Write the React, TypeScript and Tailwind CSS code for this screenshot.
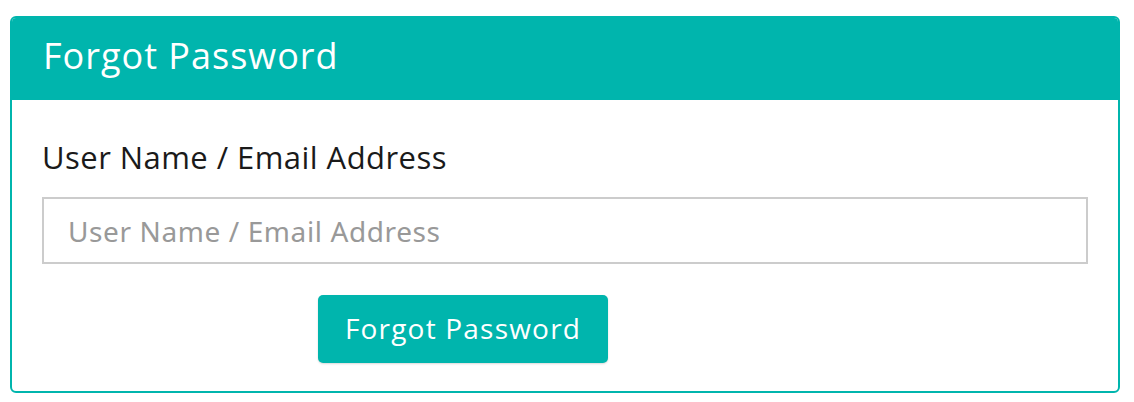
export default function App() {
  return (
    <div className="w-[1134px] h-[402px] bg-white pt-[16px] pl-[10px]" style={{ fontFamily: '"Open Sans", sans-serif' }}>
      <div className="w-[1110px] h-[377px] border-2 border-[#00b5ad] rounded-[6px] overflow-hidden flex flex-col">
        <div className="h-[82px] bg-[#00b5ad] flex items-center pl-[31px] pb-[6px]">
          <span className="text-white text-[36px] tracking-[1px] leading-none">Forgot Password</span>
        </div>
        <div className="pl-[30px] pr-[30px]">
          <div className="mt-[42px] text-[31px] tracking-[0.45px] leading-none text-[#1a1a1a]">User Name / Email Address</div>
          <input
            className="mt-[24px] w-[1046px] h-[67px] border-2 border-[#cccccc] px-[24px] text-[28px] tracking-[0.6px] text-[#555] outline-none placeholder:text-[#999]"
            style={{ fontFamily: '"Noto Sans", sans-serif' }}
            placeholder="User Name / Email Address"
          />
          <button className="mt-[31px] ml-[276px] w-[290px] h-[68px] bg-[#00b5ad] rounded-[5px] text-white text-[28px] tracking-[1.2px] leading-none shadow-[0_1px_2px_rgba(0,0,0,0.15)] pb-[2px]">
            Forgot Password
          </button>
        </div>
      </div>
    </div>
  );
}
